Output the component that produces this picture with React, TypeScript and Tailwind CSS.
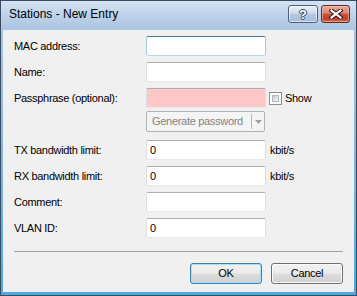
import React from "react";

const inputBase =
  "w-[120px] h-[20px] rounded-[2px] border flex items-center pl-[3px] text-[11px] text-black";
const normalBorder =
  "border-t-[#abadb3] border-l-[#dbdfe6] border-r-[#dbdfe6] border-b-[#e3e9ef]";
const focusBorder =
  "border-t-[#3d7bad] border-l-[#a4c9e3] border-r-[#a4c9e3] border-b-[#b7d9ed]";

function Row({
  label,
  mt,
  children,
}: {
  label: string;
  mt: string;
  children?: React.ReactNode;
}) {
  return (
    <div className={"flex items-center h-[20px] " + mt}>
      <div className="w-[132px] shrink-0 text-[11px] tracking-[-0.3px] text-black leading-none">
        {label}
      </div>
      {children}
    </div>
  );
}

function Btn({ label, def }: { label: string; def?: boolean }) {
  return (
    <div
      className={
        "w-[72px] h-[21px] rounded-[3px] border flex items-center justify-center text-[11px] tracking-[-0.3px] text-black bg-[linear-gradient(180deg,#f2f2f2_0%,#ebebeb_48%,#dddddd_52%,#cfcfcf_100%)] " +
        (def
          ? "border-[#3c7fb1] shadow-[inset_0_0_0_1px_#a6e3f8]"
          : "border-[#707070] shadow-[inset_0_0_0_1px_#fbfbfb]")
      }
    >
      {label}
    </div>
  );
}

export default function App() {
  return (
    <div className="w-[357px] h-[296px] overflow-hidden font-['Liberation_Sans',Arial,sans-serif]">
      <div className="w-full h-full border border-[#3a4c62] bg-[linear-gradient(180deg,#d4e3f3_0px,#bdd2ea_14px,#aac4e1_29px,#92b9e0_110px,#4aa8e1_296px)] flex flex-col px-[2px] pb-[3px]">
        {/* Title bar */}
        <div className="h-[29px] shrink-0 flex items-start">
          <div className="pl-[6px] pt-[6px] text-[12px] text-black leading-[14px]">
            Stations - New Entry
          </div>
          <div className="ml-auto mr-[4px] mt-[4px] flex gap-[3px]">
            <div className="w-[30px] h-[18px] rounded-[3px] border border-[#4d6178] bg-[linear-gradient(180deg,#e8eff8_0%,#cfdcec_45%,#b4c8e0_50%,#a7bfdc_100%)] shadow-[inset_0_0_0_1px_rgba(255,255,255,0.55)] flex items-center justify-center">
              <span className="text-[13px] font-bold leading-none text-white [text-shadow:1px_0_0_#2f425a,-1px_0_0_#2f425a,0_1px_0_#2f425a,0_-1px_0_#2f425a]">
                ?
              </span>
            </div>
            <div className="w-[29px] h-[18px] rounded-[3px] border border-[#5e2b25] bg-[linear-gradient(180deg,#eaa998_0%,#d98672_45%,#c7543d_50%,#c1402c_80%,#d3704f_100%)] shadow-[inset_0_0_0_1px_rgba(255,220,210,0.45)] flex items-center justify-center">
              <svg width="14" height="10" viewBox="0 0 14 10">
                <path
                  d="M2.5 1.5 L11.5 8.5 M11.5 1.5 L2.5 8.5"
                  stroke="#3a1c17"
                  strokeWidth="4.2"
                  strokeLinecap="square"
                  fill="none"
                />
                <path
                  d="M2.5 1.5 L11.5 8.5 M11.5 1.5 L2.5 8.5"
                  stroke="#ffffff"
                  strokeWidth="2.2"
                  strokeLinecap="square"
                  fill="none"
                />
              </svg>
            </div>
          </div>
        </div>

        {/* Client area */}
        <div className="flex-1 bg-[#f0f0f0] flex flex-col pt-[6px] pl-[11px]">
          <Row label="MAC address:" mt="">
            <div className={inputBase + " bg-white " + focusBorder}></div>
          </Row>
          <Row label="Name:" mt="mt-[6px]">
            <div className={inputBase + " bg-white " + normalBorder}></div>
          </Row>
          <Row label="Passphrase (optional):" mt="mt-[6px]">
            <div className={inputBase + " bg-[#ffc8c8] " + normalBorder}></div>
            <div className="ml-[3px] w-[13px] h-[13px] border border-[#8e8f8f] bg-white p-[2px]">
              <div className="w-full h-full bg-[linear-gradient(135deg,#c9ccd1_0%,#e4e6e9_60%,#f4f4f4_100%)] border border-[#b4b8bd]"></div>
            </div>
            <div className="ml-[3px] text-[11px] tracking-[-0.3px] text-black leading-none">
              Show
            </div>
          </Row>
          <div className="flex mt-[3px] h-[21px]">
            <div className="w-[132px] shrink-0"></div>
            <div className="w-[119px] h-[21px] rounded-[2px] border border-[#adb2b5] bg-[#f4f4f4] flex items-center">
              <div className="w-[104px] pl-[5px] text-[11px] tracking-[-0.3px] text-[#838383] leading-none">
                Generate password
              </div>
              <div className="w-px h-[15px] bg-[#b8b8b8]"></div>
              <div className="flex-1 flex items-center justify-center">
                <svg width="7" height="4" viewBox="0 0 7 4">
                  <path d="M0 0 H7 L3.5 4 Z" fill="#a0a0a0" />
                </svg>
              </div>
            </div>
          </div>
          <Row label="TX bandwidth limit:" mt="mt-[8px]">
            <div className={inputBase + " bg-white " + normalBorder}>0</div>
            <div className="ml-[4px] text-[11px] tracking-[-0.3px] text-black leading-none">
              kbit/s
            </div>
          </Row>
          <Row label="RX bandwidth limit:" mt="mt-[6px]">
            <div className={inputBase + " bg-white " + normalBorder}>0</div>
            <div className="ml-[4px] text-[11px] tracking-[-0.3px] text-black leading-none">
              kbit/s
            </div>
          </Row>
          <Row label="Comment:" mt="mt-[6px]">
            <div className={inputBase + " bg-white " + normalBorder}></div>
          </Row>
          <Row label="VLAN ID:" mt="mt-[6px]">
            <div className={inputBase + " bg-white " + normalBorder}>0</div>
          </Row>

          <div className="mt-[13px] mr-[11px] h-px bg-[#a0a0a0]"></div>

          <div className="mt-[11px] mr-[11px] flex justify-end gap-[9px]">
            <Btn label="OK" def />
            <Btn label="Cancel" />
          </div>
        </div>
      </div>
    </div>
  );
}
